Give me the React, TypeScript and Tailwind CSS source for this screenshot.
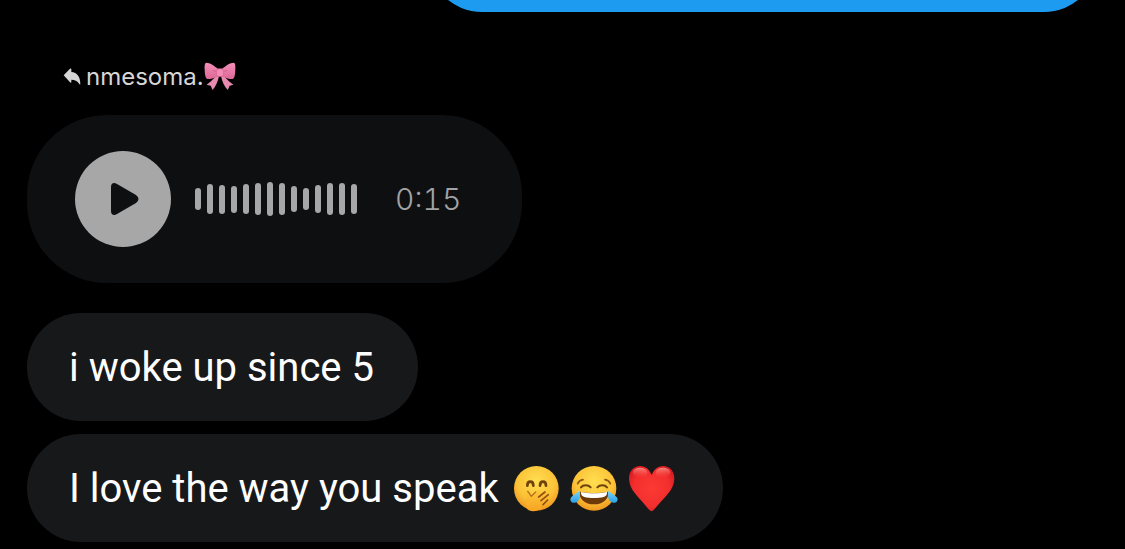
import React from 'react';

// Bar heights of the voice note, in pixels
const WAVEFORM = [22, 30, 29, 27, 30, 32, 34, 32, 26, 22, 28, 32, 32, 30];

const ReplyIcon: React.FC = () => (
  <svg viewBox="0 0 54 52" className="w-[18px] shrink-0" fill="#d6d6d6" aria-hidden="true">
    <path d="M2 22 L21 2 Q25 0 25 4 V12 C42 13 52 26 52 48 Q52 51 49 48 C43 38 36 35 25 35 V42 Q25 46 21 43 Z" />
  </svg>
);

const BowEmoji: React.FC = () => (
  <svg viewBox="0 0 90 82" className="w-8 shrink-0" role="img" aria-label="ribbon">
    <defs>
      <linearGradient id="bow" x1="0" y1="0" x2="0" y2="1">
        <stop offset="0" stopColor="#f58fb8" />
        <stop offset="1" stopColor="#dd6796" />
      </linearGradient>
    </defs>
    <path d="M34 38 C27 48 21 54 7 64 L19 67 L24 79 C34 68 39 54 42 41 Z" fill="#e88aaf" />
    <path d="M56 38 C63 48 69 54 83 64 L72 67 L67 79 C56 68 51 54 48 41 Z" fill="#e88aaf" />
    <path d="M40 20 C28 10 16 2 7 2 C2 2 1 12 2 22 C2 34 4 46 9 48 C17 49 30 45 40 40 Z" fill="url(#bow)" />
    <path d="M50 20 C62 10 74 2 83 2 C88 2 89 12 88 22 C88 34 86 46 81 48 C73 49 60 45 50 40 Z" fill="url(#bow)" />
    <path d="M36 27 L26 24 M54 27 L64 24" stroke="#c95583" strokeWidth="2" strokeLinecap="round" />
    <rect x="35" y="19" width="20" height="22" rx="7" fill="#f28db6" stroke="#d4648f" strokeWidth="2" />
  </svg>
);

const HandOverMouthEmoji: React.FC = () => (
  <svg viewBox="0 0 144 144" className="w-[48px] shrink-0" role="img" aria-label="face with hand over mouth">
    <defs>
      <radialGradient id="face" cx="0.5" cy="0.35" r="0.66">
        <stop offset="0" stopColor="#ffdf50" />
        <stop offset="0.65" stopColor="#fcc237" />
        <stop offset="1" stopColor="#ee961f" />
      </radialGradient>
      <linearGradient id="hand" x1="0" y1="0" x2="0" y2="1">
        <stop offset="0" stopColor="#ffc83c" />
        <stop offset="1" stopColor="#f6a321" />
      </linearGradient>
    </defs>
    <circle cx="70" cy="73" r="67" fill="url(#face)" />
    <path d="M43 65 C43 49 61 49 61 65 M81 65 C81 49 99 49 99 65" fill="none" stroke="#70420d" strokeWidth="8" strokeLinecap="round" />
    <path d="M42 81 C47 82 50 91 55 97 C64 88 75 75 80 79 C84 82 79 88 74 94 L91 80 C97 76 102 82 97 87 L103 84 C109 83 110 88 106 92 C112 91 112 97 107 102 L87 128 C78 144 48 147 39 130 C36 119 42 110 39 96 C37 87 37 81 42 81 Z" fill="url(#hand)" />
    <path d="M44 82 C49 87 51 92 55 97 L68 84" fill="none" stroke="#b8701a" strokeWidth="4" strokeLinecap="round" />
    <path d="M77 99 L96 84 M84 110 L106 92 M90 122 L104 108" fill="none" stroke="#925211" strokeWidth="5" strokeLinecap="round" />
  </svg>
);

const JoyEmoji: React.FC = () => (
  <svg viewBox="0 0 150 144" className="w-[50px] shrink-0" role="img" aria-label="face with tears of joy">
    <defs>
      <linearGradient id="tear" x1="0" y1="0" x2="0" y2="1">
        <stop offset="0" stopColor="#7fd5f8" />
        <stop offset="1" stopColor="#299fe5" />
      </linearGradient>
    </defs>
    <circle cx="75" cy="73" r="67" fill="url(#face)" />
    <path d="M36 70 C42 62 58 62 65 70 M85 70 C92 62 108 62 114 70" fill="none" stroke="#70420d" strokeWidth="6" strokeLinecap="round" />
    <path d="M26 59 C29 52 35 48 42 47 M124 59 C121 52 115 48 108 47" fill="none" stroke="#8b5712" strokeWidth="5" strokeLinecap="round" />
    <path d="M32 83 C55 88 95 88 118 83 C121 104 102 121 75 121 C48 121 29 104 32 83 Z" fill="#6d3908" />
    <path d="M36 84 C60 89 90 89 114 84 C115 92 111 97 104 99 C87 103 63 103 46 99 C39 97 35 92 36 84 Z" fill="#fff" />
    <path d="M31 80 C36 91 34 112 18 116 C5 118 0 105 8 98 C16 92 22 87 31 80 Z" fill="url(#tear)" />
    <path d="M119 80 C114 91 116 112 132 116 C145 118 150 105 142 98 C134 92 128 87 119 80 Z" fill="url(#tear)" />
  </svg>
);

const HeartEmoji: React.FC = () => (
  <svg viewBox="0 0 144 144" className="w-[48px] shrink-0" role="img" aria-label="red heart">
    <defs>
      <radialGradient id="heart" cx="0.5" cy="0.5" r="0.62">
        <stop offset="0" stopColor="#fb3b34" />
        <stop offset="0.65" stopColor="#f32e2d" />
        <stop offset="1" stopColor="#cf1720" />
      </radialGradient>
      <linearGradient id="shine" x1="0" y1="0" x2="0" y2="1">
        <stop offset="0" stopColor="#ffb3a8" stopOpacity="0.7" />
        <stop offset="1" stopColor="#ff5548" stopOpacity="0" />
      </linearGradient>
    </defs>
    <path d="M74 33 C66 14 53 6 40 6 C19 6 6 22 6 44 C6 78 38 101 67 138 Q74 145 80 138 C110 101 142 78 142 44 C142 22 129 6 108 6 C95 6 82 14 74 33 Z" fill="url(#heart)" />
    <ellipse cx="39" cy="26" rx="22" ry="15" fill="url(#shine)" />
    <ellipse cx="108" cy="26" rx="22" ry="15" fill="url(#shine)" />
  </svg>
);

const VoiceNote: React.FC = () => (
  <div className="flex h-[168px] shrink-0 items-center rounded-[80px] bg-[#0e0f11] pr-[61px] pl-12">
    <button type="button" aria-label="Play voice message" className="flex size-24 shrink-0 items-center justify-center rounded-full bg-[#a7a7a7]">
      <svg viewBox="0 0 96 96" className="size-24" fill="#0e0f11" aria-hidden="true">
        <path d="M36 36 C36 32 39 31 42 33 L61 44 Q66 48 61 52 L42 63 C39 65 36 64 36 60 Z" />
      </svg>
    </button>
    <div className="ml-6 flex items-center gap-[6px]" aria-hidden="true">
      {WAVEFORM.map((height, i) => (
        <span key={i} className="w-[6px] rounded-full bg-[#a7a7a9]" style={{ height }} />
      ))}
    </div>
    <span className="ml-[38px] font-['Inter',sans-serif] text-[30px] leading-10 font-light text-[#a3a3a5] tabular-nums">0:15</span>
  </div>
);

const Bubble: React.FC<{ children: React.ReactNode }> = ({ children }) => (
  <div className="flex h-[108px] items-center rounded-full bg-[#17181a] pr-11 pl-[42px] text-[40px] leading-[48px] text-white">
    {children}
  </div>
);

export default function App() {
  return (
    <main className="flex h-screen flex-col items-start justify-end overflow-hidden bg-black px-[27px] pb-[7px] font-['Roboto',sans-serif]">
      <div className="h-[108px] w-[670px] max-w-full shrink-0 self-end rounded-full bg-[#1d9bf0]" />

      <div className="mt-[49px] mb-[22px] ml-9 flex h-8 shrink-0 items-center">
        <ReplyIcon />
        <span className="ml-[5px] font-['Inter',sans-serif] text-[24px] leading-8 text-[#d6d6d6]">nmesoma.</span>
        <BowEmoji />
      </div>

      <VoiceNote />

      <div className="mt-[30px] shrink-0">
        <Bubble>
          <p className="pt-[2px]">i woke up since 5</p>
        </Bubble>
      </div>

      <div className="mt-[13px] shrink-0">
        <Bubble>
          <p className="pt-[2px]">I love the way you speak</p>
          <div className="mr-1 ml-[14px] flex items-center gap-2">
            <HandOverMouthEmoji />
            <JoyEmoji />
            <HeartEmoji />
          </div>
        </Bubble>
      </div>
    </main>
  );
}
